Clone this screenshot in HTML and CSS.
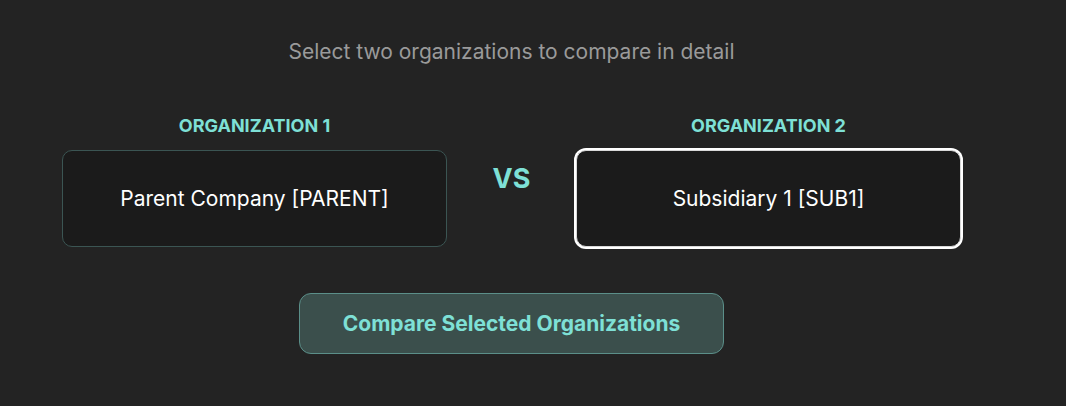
FILE: index.html
```html
<!DOCTYPE html>
<html lang="en">
<head>
    <meta charset="UTF-8">
    <meta name="viewport" content="width=device-width, initial-scale=1.0">
    <title>Compare Organizations</title>
    <link rel="stylesheet" href="styles.css">
</head>
<body>
    <div class="page">
        <p class="subtitle">Select two organizations to compare in detail</p>

        <div class="pickers">
            <div class="picker">
                <div class="picker-label">ORGANIZATION 1</div>
                <div class="picker-box">Parent Company [PARENT]</div>
            </div>
            <div class="vs">VS</div>
            <div class="picker">
                <div class="picker-label">ORGANIZATION 2</div>
                <div class="picker-box focused">Subsidiary 1 [SUB1]</div>
            </div>
        </div>

        <div class="actions">
            <button class="compare-btn">Compare Selected Organizations</button>
        </div>
    </div>
</body>
</html>
```

FILE: styles.css
```css
body {
    margin: 0;
    background-color: #232323;
    font-family: Inter, "Noto Sans", sans-serif;
    color: #fff;
}
.page {
    width: 1023px;
    padding: 0 62px;
    box-sizing: border-box;
}
.subtitle {
    margin: 0;
    padding-top: 38px;
    text-align: center;
    font-size: 21px;
    line-height: 28px;
    color: #9a9a9a;
}
.pickers {
    display: grid;
    grid-template-columns: 385px 1fr 385px;
    margin-top: 50px;
}
.picker-label {
    text-align: center;
    font-size: 18px;
    font-weight: 700;
    line-height: 20px;
    color: #7ee0d6;
    margin-bottom: 14px;
}
.picker-box {
    height: 97px;
    box-sizing: border-box;
    display: flex;
    align-items: center;
    justify-content: center;
    background-color: #1b1b1b;
    border: 1px solid #3b5553;
    border-radius: 10px;
    font-size: 21px;
}
.picker-box.focused {
    border: 1px solid #d8d8d8;
    box-shadow: 0 0 0 2px #fff;
}
.vs {
    display: flex;
    justify-content: center;
    padding-top: 46px;
    font-size: 27px;
    font-weight: 700;
    color: #7ee0d6;
}
.actions {
    display: flex;
    justify-content: center;
    margin-top: 46px;
}
.compare-btn {
    width: 425px;
    height: 61px;
    background-color: #3b4f4c;
    border: 1px solid #5b8f89;
    border-radius: 12px;
    color: #7ee0d6;
    font-family: Inter, "Noto Sans", sans-serif;
    font-size: 21px;
    font-weight: 700;
    cursor: pointer;
}
```
